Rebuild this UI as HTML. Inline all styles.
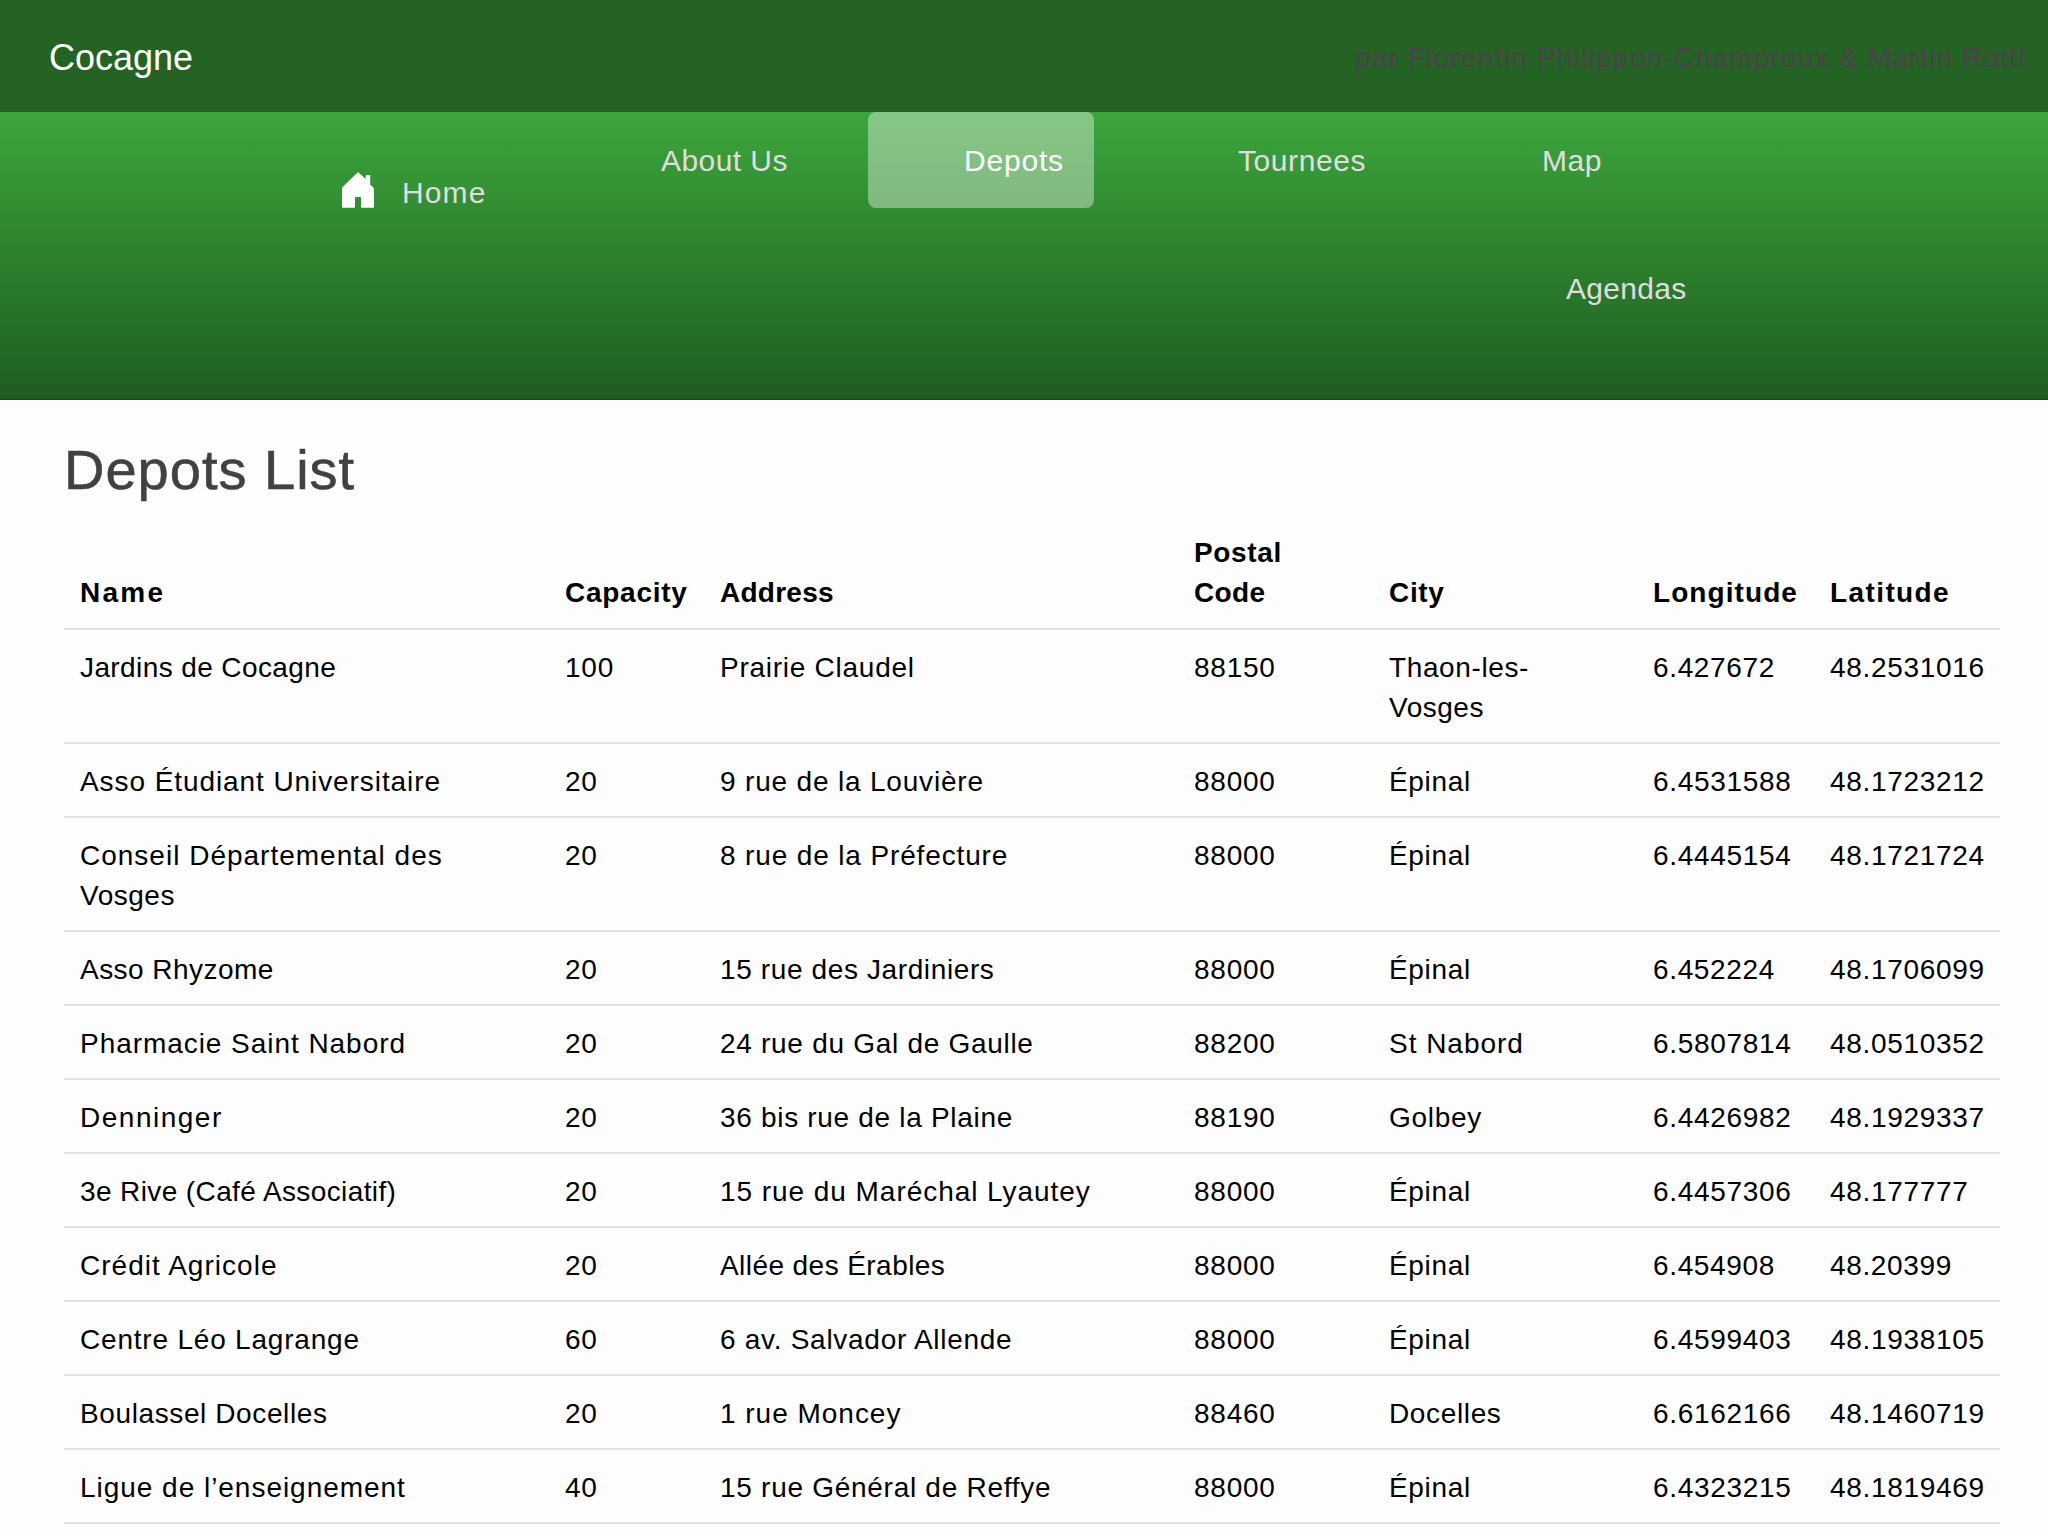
<!DOCTYPE html>
<html>
<head>
<meta charset="utf-8">
<style>
html,body{margin:0;padding:0;}
body{width:2048px;height:1536px;overflow:hidden;background:#fdfdfd;font-family:"Liberation Sans",sans-serif;position:relative;}
.abs{position:absolute;white-space:nowrap;}
#topbar{position:absolute;left:0;top:0;width:2048px;height:112px;background:#256325;}
#topbar .line{position:absolute;left:0;top:111px;width:2048px;height:1px;background:#215e22;}
#brand{left:49px;top:28px;font-size:36px;line-height:60px;color:#fff;}
#author{right:22px;top:38px;letter-spacing:1.24px;font-size:28px;line-height:40px;color:#484448;-webkit-text-stroke:0.3px #484448;}
#nav{position:absolute;left:0;top:112px;width:2048px;height:288px;background:linear-gradient(#3ca63c,#1f5c20 287px,#0b4e10 287px);}
#nav .bline{position:absolute;left:0;top:287px;width:2048px;height:1px;background:#0b4e10;}
.ni{font-size:30px;line-height:40px;color:#e0dce0;}
#active{position:absolute;left:868px;top:112px;width:226px;height:96px;border-radius:8px;background:rgba(255,255,255,0.38);}
h1{position:absolute;left:64px;top:435px;-webkit-text-stroke:0.6px #414141;margin:0;font-size:56px;line-height:70px;font-weight:400;letter-spacing:1px;color:#414141;white-space:nowrap;}
table{position:absolute;left:64px;top:516px;width:1936px;border-collapse:collapse;table-layout:fixed;font-size:28px;line-height:40px;color:#000;}
th,td{padding:17px 16px 15px 16px;text-align:left;vertical-align:top;}
th{font-weight:700;vertical-align:bottom;}
td{border-top:2px solid #dee2e6;padding-top:18px;padding-bottom:14px;}
</style>
</head>
<body>
<div id="topbar"><div class="line"></div></div>
<div id="brand" class="abs">Cocagne</div>
<div id="author" class="abs">par Florentin Philippon-Champroux &amp; Martin Ratti</div>
<div id="nav"><div class="bline"></div></div>
<div id="active"></div>
<svg class="abs" style="left:340px;top:170px" width="38" height="40" viewBox="0 0 38 40">
<path fill="#fff" stroke="#fff" stroke-width="1" stroke-linejoin="round" d="M18 2.7 L2.5 17.7 L2.5 37.2 L14.5 37.2 L14.5 26.5 L21.5 26.5 L21.5 37.2 L33.5 37.2 L33.5 18.2 L29.7 14.7 L29.7 5.5 L26.2 5.5 L26.2 10 Z"/>
</svg>
<div class="abs ni" style="left:402px;top:173px;letter-spacing:1.1px">Home</div>
<div class="abs ni" style="left:661px;top:141px;letter-spacing:0.43px">About Us</div>
<div class="abs ni" style="left:964px;top:141px;letter-spacing:0.8px;color:#fff">Depots</div>
<div class="abs ni" style="left:1238px;top:141px;letter-spacing:0.57px">Tournees</div>
<div class="abs ni" style="left:1542px;top:141px;letter-spacing:0.5px">Map</div>
<div class="abs ni" style="left:1566px;top:269px;letter-spacing:0.3px">Agendas</div>
<h1>Depots List</h1>
<table>
<colgroup><col style="width:485px"><col style="width:155px"><col style="width:474px"><col style="width:195px"><col style="width:264px"><col style="width:177px"><col style="width:186px"></colgroup>
<thead><tr><th><span style="letter-spacing:2.24px">Name</span></th><th><span style="letter-spacing:0.73px">Capacity</span></th><th><span style="letter-spacing:0.25px">Address</span></th><th><span style="letter-spacing:0.65px">Postal</span><br><span style="letter-spacing:0.32px">Code</span></th><th><span style="letter-spacing:0.67px">City</span></th><th><span style="letter-spacing:1.08px">Longitude</span></th><th><span style="letter-spacing:1.40px">Latitude</span></th></tr></thead>
<tbody>
<tr><td><span style="letter-spacing:0.40px">Jardins de Cocagne</span></td><td><span style="letter-spacing:0.77px">100</span></td><td><span style="letter-spacing:0.74px">Prairie Claudel</span></td><td><span style="letter-spacing:0.76px">88150</span></td><td><span style="letter-spacing:0.62px">Thaon-les-</span><br><span style="letter-spacing:0.51px">Vosges</span></td><td><span style="letter-spacing:0.65px">6.427672</span></td><td><span style="letter-spacing:0.68px">48.2531016</span></td></tr>
<tr><td><span style="letter-spacing:0.92px">Asso Étudiant Universitaire</span></td><td><span style="letter-spacing:0.77px">20</span></td><td><span style="letter-spacing:0.82px">9 rue de la Louvière</span></td><td><span style="letter-spacing:0.76px">88000</span></td><td><span style="letter-spacing:0.67px">Épinal</span></td><td><span style="letter-spacing:0.67px">6.4531588</span></td><td><span style="letter-spacing:0.68px">48.1723212</span></td></tr>
<tr><td><span style="letter-spacing:1.00px">Conseil Départemental des</span><br><span style="letter-spacing:0.51px">Vosges</span></td><td><span style="letter-spacing:0.77px">20</span></td><td><span style="letter-spacing:0.86px">8 rue de la Préfecture</span></td><td><span style="letter-spacing:0.76px">88000</span></td><td><span style="letter-spacing:0.67px">Épinal</span></td><td><span style="letter-spacing:0.67px">6.4445154</span></td><td><span style="letter-spacing:0.68px">48.1721724</span></td></tr>
<tr><td><span style="letter-spacing:0.46px">Asso Rhyzome</span></td><td><span style="letter-spacing:0.77px">20</span></td><td><span style="letter-spacing:0.62px">15 rue des Jardiniers</span></td><td><span style="letter-spacing:0.76px">88000</span></td><td><span style="letter-spacing:0.67px">Épinal</span></td><td><span style="letter-spacing:0.65px">6.452224</span></td><td><span style="letter-spacing:0.68px">48.1706099</span></td></tr>
<tr><td><span style="letter-spacing:0.95px">Pharmacie Saint Nabord</span></td><td><span style="letter-spacing:0.77px">20</span></td><td><span style="letter-spacing:0.71px">24 rue du Gal de Gaulle</span></td><td><span style="letter-spacing:0.76px">88200</span></td><td><span style="letter-spacing:0.97px">St Nabord</span></td><td><span style="letter-spacing:0.67px">6.5807814</span></td><td><span style="letter-spacing:0.68px">48.0510352</span></td></tr>
<tr><td><span style="letter-spacing:1.51px">Denninger</span></td><td><span style="letter-spacing:0.77px">20</span></td><td><span style="letter-spacing:0.69px">36 bis rue de la Plaine</span></td><td><span style="letter-spacing:0.76px">88190</span></td><td><span style="letter-spacing:0.73px">Golbey</span></td><td><span style="letter-spacing:0.67px">6.4426982</span></td><td><span style="letter-spacing:0.68px">48.1929337</span></td></tr>
<tr><td><span style="letter-spacing:0.39px">3e Rive (Café Associatif)</span></td><td><span style="letter-spacing:0.77px">20</span></td><td><span style="letter-spacing:0.95px">15 rue du Maréchal Lyautey</span></td><td><span style="letter-spacing:0.76px">88000</span></td><td><span style="letter-spacing:0.67px">Épinal</span></td><td><span style="letter-spacing:0.67px">6.4457306</span></td><td><span style="letter-spacing:0.67px">48.177777</span></td></tr>
<tr><td><span style="letter-spacing:1.03px">Crédit Agricole</span></td><td><span style="letter-spacing:0.77px">20</span></td><td><span style="letter-spacing:0.43px">Allée des Érables</span></td><td><span style="letter-spacing:0.76px">88000</span></td><td><span style="letter-spacing:0.67px">Épinal</span></td><td><span style="letter-spacing:0.65px">6.454908</span></td><td><span style="letter-spacing:0.65px">48.20399</span></td></tr>
<tr><td><span style="letter-spacing:0.80px">Centre Léo Lagrange</span></td><td><span style="letter-spacing:0.77px">60</span></td><td><span style="letter-spacing:0.72px">6 av. Salvador Allende</span></td><td><span style="letter-spacing:0.76px">88000</span></td><td><span style="letter-spacing:0.67px">Épinal</span></td><td><span style="letter-spacing:0.67px">6.4599403</span></td><td><span style="letter-spacing:0.68px">48.1938105</span></td></tr>
<tr><td><span style="letter-spacing:0.61px">Boulassel Docelles</span></td><td><span style="letter-spacing:0.77px">20</span></td><td><span style="letter-spacing:0.98px">1 rue Moncey</span></td><td><span style="letter-spacing:0.76px">88460</span></td><td><span style="letter-spacing:0.64px">Docelles</span></td><td><span style="letter-spacing:0.67px">6.6162166</span></td><td><span style="letter-spacing:0.68px">48.1460719</span></td></tr>
<tr><td><span style="letter-spacing:0.97px">Ligue de l’enseignement</span></td><td><span style="letter-spacing:0.77px">40</span></td><td><span style="letter-spacing:0.72px">15 rue Général de Reffye</span></td><td><span style="letter-spacing:0.76px">88000</span></td><td><span style="letter-spacing:0.67px">Épinal</span></td><td><span style="letter-spacing:0.67px">6.4323215</span></td><td><span style="letter-spacing:0.68px">48.1819469</span></td></tr>
<tr><td>&nbsp;</td><td></td><td></td><td></td><td></td><td></td><td></td></tr>
</tbody>
</table>
</body>
</html>
